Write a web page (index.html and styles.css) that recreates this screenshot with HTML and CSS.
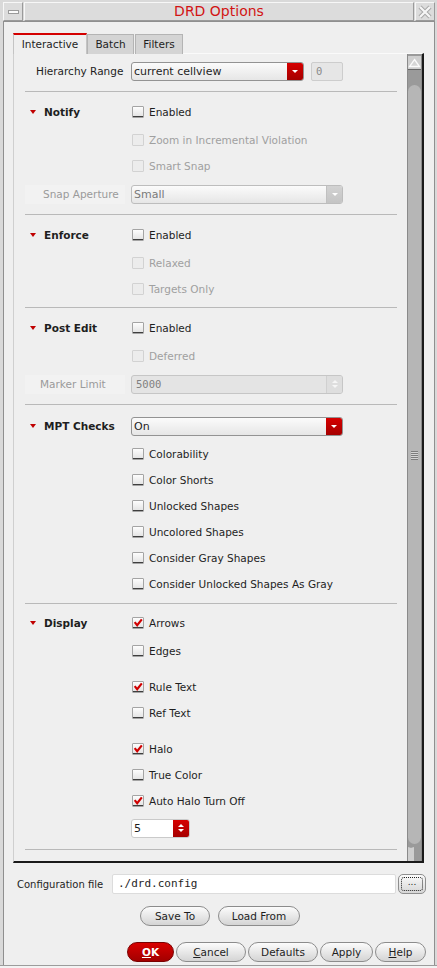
FILE: index.html
```html
<!doctype html>
<html lang="en">
<head>
	<meta charset="UTF-8">
	<title>DRD Options</title>
	<link rel="stylesheet" href="styles.css">
</head>
<body>
<div class="window">
	<div class="titlebar">
		<div class="tb-btn"><span class="min-icon"></span></div>
		<div class="tb-title">DRD Options</div>
		<div class="tb-btn">
			<svg width="16" height="16" viewBox="0 0 16 16">
				<path d="M3 3 L13 13 M13 3 L3 13" stroke="#a8a8a8" stroke-width="4.2" fill="none"/>
				<path d="M3 3 L13 13 M13 3 L3 13" stroke="#f6f6f6" stroke-width="2.2" fill="none"/>
			</svg>
		</div>
	</div>
	<div class="body">
		<div class="tabs">
			<div class="tab on">Interactive</div>
			<div class="tab">Batch</div>
			<div class="tab filters">Filters</div>
		</div>
		<div class="panel">
			<div class="content">
				<div class="row first">
					<div class="lbl" style="padding-left:22px">Hierarchy Range</div>
					<div class="combo short"><span class="combo-text">current cellview</span><span class="combo-btn"><i class="down"></i></span></div>
					<div class="field">0</div>
				</div>
				<div class="sep"></div>

				<!-- notify -->
				<div class="sec s-notify">
					<div class="row">
						<div class="lbl head"><i class="tri"></i>Notify</div>
						<div class="chk"><span class="box"></span>Enabled</div>
					</div>
					<div class="row mt2">
						<div class="lbl"></div>
						<div class="chk off"><span class="box"></span>Zoom in Incremental Violation</div>
					</div>
					<div class="row">
						<div class="lbl"></div>
						<div class="chk off"><span class="box"></span>Smart Snap</div>
					</div>
					<div class="row mt2">
						<div class="lbl dim"><span class="lbl-bg" style="padding-left:18px">Snap Aperture</span></div>
						<div class="combo long dis"><span class="combo-text">Small</span><span class="combo-btn"><i class="down"></i></span></div>
					</div>
				</div>
				<div class="sep"></div>

				<!-- enforce -->
				<div class="sec s-enforce">
					<div class="row">
						<div class="lbl head"><i class="tri"></i>Enforce</div>
						<div class="chk"><span class="box"></span>Enabled</div>
					</div>
					<div class="row mt2">
						<div class="lbl"></div>
						<div class="chk off"><span class="box"></span>Relaxed</div>
					</div>
					<div class="row">
						<div class="lbl"></div>
						<div class="chk off"><span class="box"></span>Targets Only</div>
					</div>
				</div>
				<div class="sep"></div>

				<!-- post edit -->
				<div class="sec s-post">
					<div class="row">
						<div class="lbl head"><i class="tri"></i>Post Edit</div>
						<div class="chk"><span class="box"></span>Enabled</div>
					</div>
					<div class="row mt2">
						<div class="lbl"></div>
						<div class="chk off"><span class="box"></span>Deferred</div>
					</div>
					<div class="row mt2">
						<div class="lbl dim"><span class="lbl-bg" style="padding-left:15px">Marker Limit</span></div>
						<div class="spin long dis"><span class="spin-text">5000</span><span class="spin-btn"><i class="up"></i><i class="down"></i></span></div>
					</div>
				</div>
				<div class="sep"></div>

				<!-- mpt -->
				<div class="sec s-mpt">
					<div class="row">
						<div class="lbl head"><i class="tri"></i>MPT Checks</div>
						<div class="combo long"><span class="combo-text">On</span><span class="combo-btn"><i class="down"></i></span></div>
					</div>
					<div class="row mt2">
						<div class="lbl"></div>
						<div class="chk"><span class="box"></span>Colorability</div>
					</div>
					<div class="row">
						<div class="lbl"></div>
						<div class="chk"><span class="box"></span>Color Shorts</div>
					</div>
					<div class="row">
						<div class="lbl"></div>
						<div class="chk"><span class="box"></span>Unlocked Shapes</div>
					</div>
					<div class="row">
						<div class="lbl"></div>
						<div class="chk"><span class="box"></span>Uncolored Shapes</div>
					</div>
					<div class="row">
						<div class="lbl"></div>
						<div class="chk"><span class="box"></span>Consider Gray Shapes</div>
					</div>
					<div class="row">
						<div class="lbl"></div>
						<div class="chk"><span class="box"></span>Consider Unlocked Shapes As Gray</div>
					</div>
				</div>
				<div class="sep"></div>

				<!-- display -->
				<div class="sec s-display">
					<div class="row">
						<div class="lbl head"><i class="tri"></i>Display</div>
						<div class="chk"><span class="box"><svg viewBox="0 0 12 12"><path d="M2 5 L5 8.6 L10.6 1.6" fill="none" stroke="#d00000" stroke-width="2.6"/></svg></span>Arrows</div>
					</div>
					<div class="row mt2">
						<div class="lbl"></div>
						<div class="chk"><span class="box"></span>Edges</div>
					</div>
					<div class="row mt10">
						<div class="lbl"></div>
						<div class="chk"><span class="box"><svg viewBox="0 0 12 12"><path d="M2 5 L5 8.6 L10.6 1.6" fill="none" stroke="#d00000" stroke-width="2.6"/></svg></span>Rule Text</div>
					</div>
					<div class="row">
						<div class="lbl"></div>
						<div class="chk"><span class="box"></span>Ref Text</div>
					</div>
					<div class="row mt10">
						<div class="lbl"></div>
						<div class="chk"><span class="box"><svg viewBox="0 0 12 12"><path d="M2 5 L5 8.6 L10.6 1.6" fill="none" stroke="#d00000" stroke-width="2.6"/></svg></span>Halo</div>
					</div>
					<div class="row">
						<div class="lbl"></div>
						<div class="chk"><span class="box"></span>True Color</div>
					</div>
					<div class="row">
						<div class="lbl"></div>
						<div class="chk"><span class="box"><svg viewBox="0 0 12 12"><path d="M2 5 L5 8.6 L10.6 1.6" fill="none" stroke="#d00000" stroke-width="2.6"/></svg></span>Auto Halo Turn Off</div>
					</div>
					<div class="row mt1">
						<div class="lbl"></div>
						<div class="spin small"><span class="spin-text">5</span><span class="spin-btn"><i class="up"></i><i class="down"></i></span></div>
					</div>
				</div>
				<div class="sep"></div>
			</div>
			<div class="scrollbar">
				<div class="sb-btn"><svg width="13" height="10" viewBox="0 0 13 10"><path d="M6.5 1.5 L11.5 8.5 L1.5 8.5 Z" fill="#d6d6d6" stroke="#fbfbfb" stroke-width="1.3"/></svg></div>
				<div class="sb-trough">
					<div class="sb-thumb"><span class="grip"></span></div>
				</div>
				<div class="sb-btn down"><svg width="13" height="10" viewBox="0 0 13 10"><path d="M6.5 8.5 L11.5 1.5 L1.5 1.5 Z" fill="#d6d6d6" stroke="#fbfbfb" stroke-width="1.3"/></svg></div>
			</div>
		</div>

		<div class="config">
			<span class="config-lbl">Configuration file</span>
			<div class="config-input">./drd.config</div>
			<div class="browse"><span>...</span></div>
		</div>
		<div class="actions">
			<div class="btn save">Save To</div>
			<div class="btn load">Load From</div>
		</div>
		<div class="dialog-btns">
			<div class="btn ok"><u>O</u>K</div>
			<div class="btn cancel"><u>C</u>ancel</div>
			<div class="btn defaults">Defaults</div>
			<div class="btn apply">Apply</div>
			<div class="btn help"><u>H</u>elp</div>
		</div>
	</div>
</div>
</body>
</html>
```

FILE: styles.css
```css
*{
	margin: 0;
	padding: 0;
	box-sizing: border-box;
}
html,body{
	background: #f3f3f3;
}
body{
	width: 437px;
	height: 968px;
	font-family: "DejaVu Sans", "Liberation Sans", sans-serif;
	font-size: 10.5px;
	color: #1e1e1e;
}
.window{
	height: 966px;
	background: #d9d9d9;
	padding: 2px 2px 0 3px;
	display: flex;
	flex-direction: column;
	border-bottom: 1px solid #9c9c9c;
}
/* title bar */
.titlebar{
	height: 19px;
	display: flex;
	gap: 1px;
}
.tb-btn,.tb-title{
	background: #dcdcdc;
	border: 1px solid;
	border-color: #f7f7f7 #9a9a9a #9a9a9a #f7f7f7;
}
.tb-btn{
	width: 20px;
	display: flex;
	align-items: center;
	justify-content: center;
}
.min-icon{
	width: 11px;
	height: 4px;
	background: #fbfbfb;
	border: 1px solid #9a9a9a;
}
.tb-title{
	flex: 1;
	text-align: center;
	color: #d21414;
	font-size: 14px;
	line-height: 17px;
}
/* main body */
.body{
	flex: 1;
	background: #efefef;
	border: 1px solid #8f8f8f;
	border-bottom: none;
	padding: 11px 8px 0 9px;
	display: flex;
	flex-direction: column;
}
.tabs{
	display: flex;
	align-items: flex-end;
	height: 21px;
	margin-bottom: -1px;
	position: relative;
	z-index: 1;
}
.tab{
	height: 20px;
	width: 47px;
	background: #d4d4d4;
	border: 1px solid #b4b4b4;
	border-bottom: none;
	text-align: center;
	line-height: 19px;
	margin-left: 0;
}
.tab.filters{
	width: 48px;
	margin-left: 1px;
}
.tab.on{
	width: 74px;
	height: 21px;
	background: #efefef;
	border-top: 2px solid #d40000;
	border-color: #d40000 #c4c4c4 #efefef #c4c4c4;
	line-height: 19px;
}
.panel{
	width: 411px;
	height: 810px;
	display: flex;
	border-top: 1px solid #fafafa;
	border-left: 1px solid #cfcfcf;
	border-right: 2px solid #1a1a1a;
	border-bottom: 2px solid #1a1a1a;
}
.content{
	width: 393px;
	padding-top: 4px;
}
.row{
	height: 26px;
	display: flex;
	align-items: center;
}
.mt1{ margin-top: 1px; }
.mt2{ margin-top: 2px; }
.mt10{ margin-top: 10px; }
.sec{ padding: 7px 0; }
.s-enforce{ padding-bottom: 5px; }
.s-mpt{ padding-top: 8px; padding-bottom: 6px; }
.s-display{ padding-top: 6px; padding-bottom: 8px; }
.sep{
	height: 1px;
	background: #b9b9b9;
	margin: 0 10px 0 11px;
}
.row.first + .sep{ margin-top: 7px; }
.lbl{
	width: 118px;
	flex: none;
	white-space: nowrap;
}
.lbl.dim{
	color: #9a9a9a;
	padding-left: 11px;
}
.lbl-bg{
	display: block;
	width: 100px;
	height: 19px;
	line-height: 19px;
	background: #f2f2f2;
}
.lbl.head{
	font-weight: bold;
	padding-left: 16px;
	display: flex;
	align-items: center;
}
.tri{
	width: 0;
	height: 0;
	border-left: 3px solid transparent;
	border-right: 3px solid transparent;
	border-top: 4px solid #c00000;
	margin-right: 8px;
}
/* checkbox */
.chk{
	display: flex;
	align-items: center;
	white-space: nowrap;
}
.box{
	width: 12px;
	height: 12px;
	margin-right: 5px;
	border: 1px solid #a4a4a4;
	border-radius: 1px;
	background: linear-gradient(#fdfdfd, #e2e2e2);
	box-shadow: inset 0 -1px 0 #3e3e3e;
	display: flex;
}
.box svg{
	width: 10px;
	height: 10px;
}
.chk.off{
	color: #a0a0a0;
}
.chk.off .box{
	border-color: #d2d2d2;
	background: #ececec;
	box-shadow: none;
}
/* combo boxes */
.combo,.spin{
	height: 19px;
	display: flex;
	border: 1px solid #939393;
	border-radius: 3px;
	background: linear-gradient(#fbfbfb, #e6e6e6);
	overflow: hidden;
	font-size: 11px;
	margin-left: -1px;
}
.combo.short{ width: 173px; }
.combo.long,.spin.long{ width: 212px; }
.combo-text,.spin-text{
	flex: 1;
	padding-left: 2px;
	line-height: 17px;
}
.combo-btn,.spin-btn{
	width: 16px;
	background: linear-gradient(#d60000, #a50000);
	display: flex;
	flex-direction: column;
	align-items: center;
	justify-content: center;
	gap: 2px;
}
.down,.up{
	width: 0;
	height: 0;
	border-left: 3px solid transparent;
	border-right: 3px solid transparent;
}
.down{ border-top: 3px solid #fff; }
.up{ border-bottom: 3px solid #fff; }
.combo.dis{
	border-color: #bdbdbd;
	color: #7a7a7a;
}
.combo.dis .combo-btn{
	background: linear-gradient(#d2d2d2, #c4c4c4);
	border-left: 1px solid #c0c0c0;
}
.field{
	width: 32px;
	height: 19px;
	margin-left: 7px;
	background: #e6e6e6;
	border: 1px solid #cdcdcd;
	border-radius: 2px;
	font-family: "DejaVu Sans Mono", monospace;
	font-size: 10.5px;
	color: #8a8a8a;
	padding-left: 4px;
	line-height: 17px;
}
.spin.dis{
	background: #e4e4e4;
	border-color: #c6c6c6;
	color: #808080;
}
.spin.dis .spin-text{
	font-family: "DejaVu Sans Mono", monospace;
	font-size: 10.5px;
	padding-left: 4px;
}
.spin.dis .spin-btn{
	background: #dedede;
	border-left: 1px solid #d0d0d0;
}
.spin.dis .up{ border-bottom-color: #f6f6f6; }
.spin.dis .down{ border-top-color: #f6f6f6; }
.spin.small{
	width: 59px;
	background: #fff;
	border-color: #cacaca;
}
/* scrollbar */
.scrollbar{
	width: 15px;
	padding-top: 2px;
	display: flex;
	flex-direction: column;
	background: #9a9a9a;
	border-left: 1px solid #8a8a8a;
	border-right: 1px solid #8a8a8a;
}
.sb-btn{
	height: 14px;
	background: #cfcfcf;
	border-bottom: 1px solid #666;
	display: flex;
	align-items: center;
	justify-content: center;
}
.sb-btn.down{
	border-bottom: none;
	border-top: 1px solid #a0a0a0;
	height: 14px;
}
.sb-trough{
	flex: 1;
	padding: 15px 0 3px;
	display: flex;
}
.sb-thumb{
	flex: 1;
	background: #b6b6b6;
	border-radius: 7px;
	display: flex;
	align-items: center;
	justify-content: center;
}
.grip{
	width: 7px;
	height: 9px;
	background: repeating-linear-gradient(#7d7d7d 0 1px, #d4d4d4 1px 2px, #b6b6b6 2px 2px);
	margin-top: -18px;
}
/* bottom area */
.config{
	display: flex;
	align-items: center;
	margin-top: 11px;
	padding-left: 4px;
	height: 20px;
}
.config-lbl{
	width: 95px;
	font-size: 10px;
}
.config-input{
	width: 284px;
	height: 20px;
	background: #fff;
	border: 1px solid #dcdcdc;
	border-radius: 2px;
	font-family: "DejaVu Sans Mono", monospace;
	font-size: 11px;
	line-height: 18px;
	padding-left: 5px;
}
.browse{
	width: 28px;
	height: 20px;
	margin-left: 2px;
	border: 1px solid #8e8e8e;
	border-radius: 5px;
	background: linear-gradient(#fbfbfb, #d6d6d6);
	padding: 2px;
}
.browse span{
	display: block;
	height: 100%;
	border: 1px dotted #222;
	border-radius: 3px;
	font-size: 9px;
	line-height: 8px;
	text-align: center;
}
.btn{
	height: 20px;
	border: 1px solid #8c8c8c;
	border-radius: 10px;
	background: linear-gradient(#fcfcfc, #d4d4d4);
	text-align: center;
	line-height: 18px;
}
.btn u{
	text-decoration: underline;
}
.actions{
	display: flex;
	justify-content: center;
	gap: 8px;
	margin-top: 12px;
	padding-left: 1px;
}
.save{ width: 70px; }
.load{ width: 82px; }
.dialog-btns{
	display: flex;
	justify-content: flex-end;
	gap: 2px;
	margin-top: 16px;
	padding-right: 0;
}
.ok{
	width: 47px;
	background: linear-gradient(#d80000, #a20000);
	border-color: #7a0000;
	color: #fff;
	font-weight: bold;
}
.cancel{ width: 70px; }
.defaults{ width: 70px; }
.apply{ width: 53px; }
.help{ width: 51px; }
```
